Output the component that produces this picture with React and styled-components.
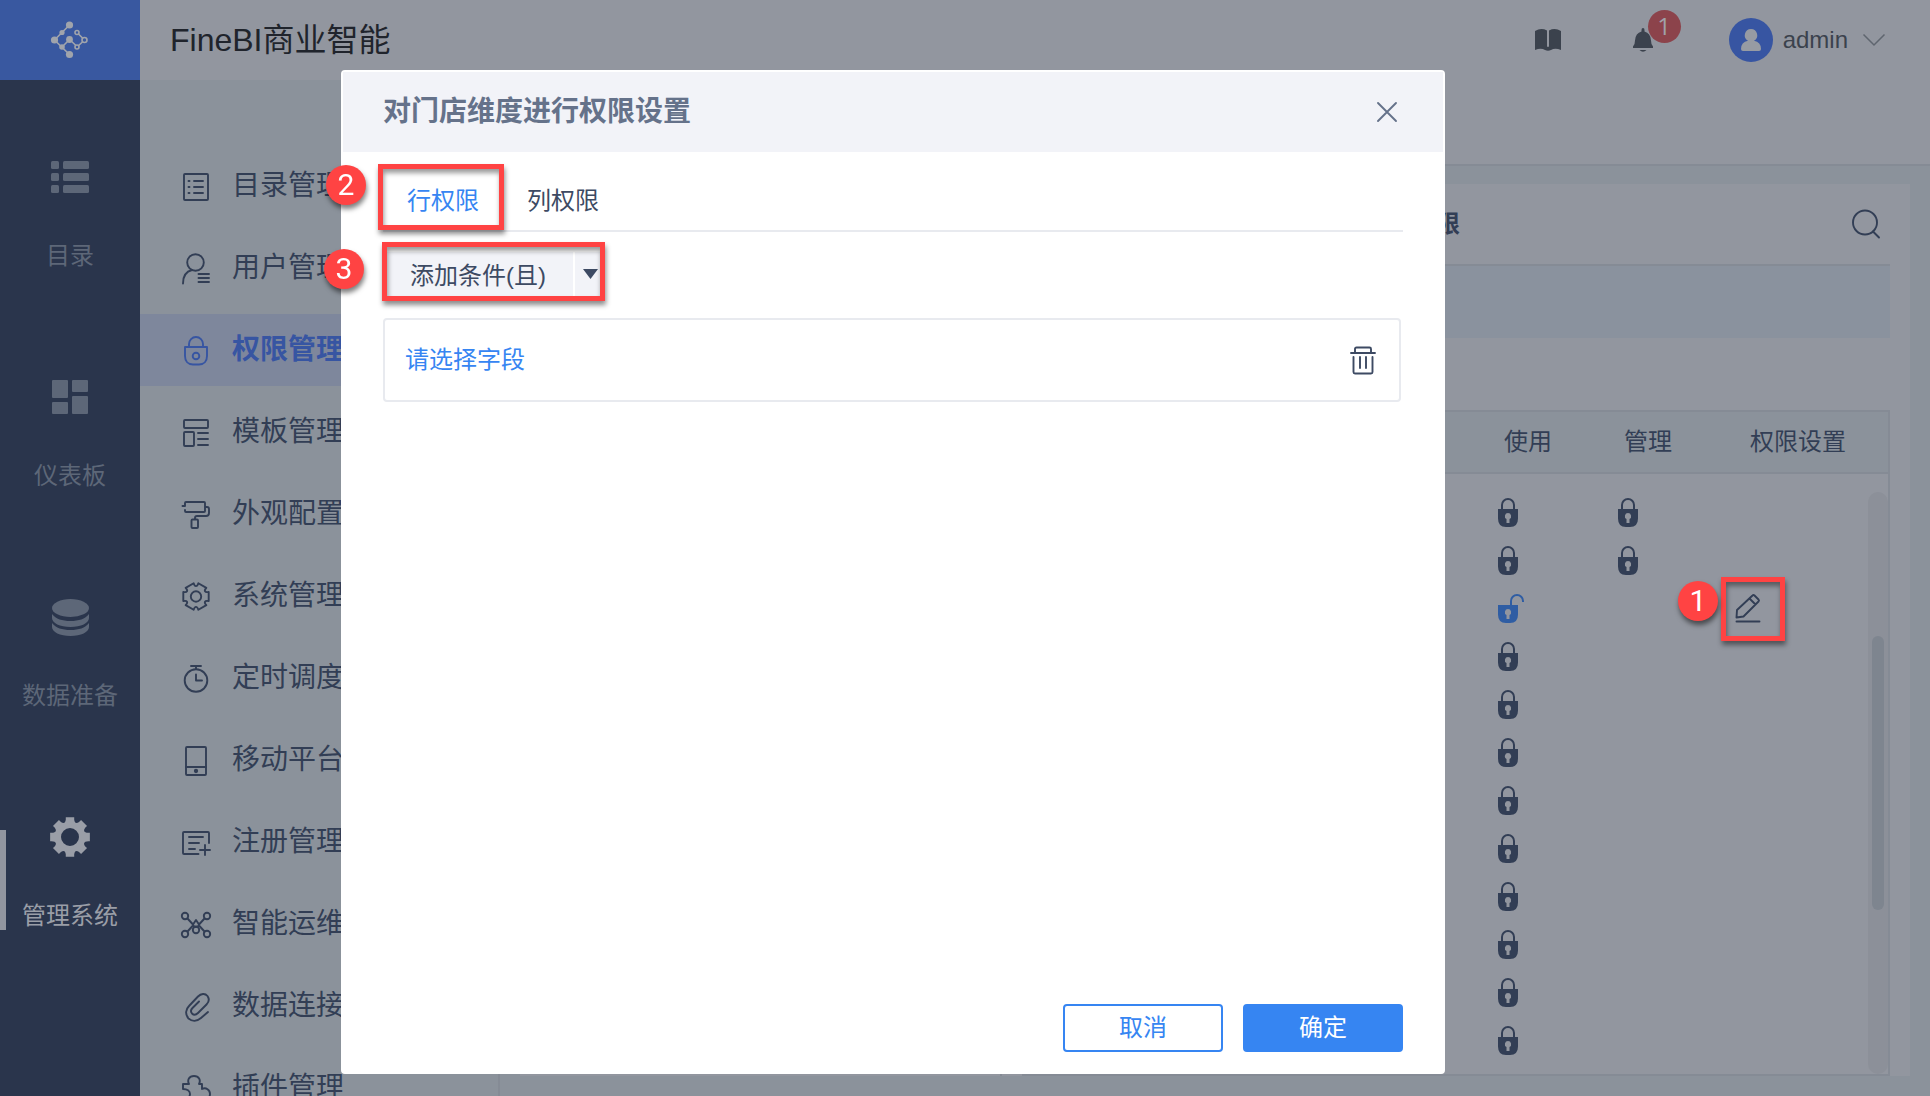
import React from "react"
import styled, { createGlobalStyle, css } from "styled-components"

const colors = {
  rail: '#2a354c',
  logo: '#3958a0',
  bar: '#92969f',
  page: '#8b929b',
  block: '#8a929e',
  line: '#858b95',
  text: '#323e55',
  active: '#3755a2',
  primary: '#3685f2',
  dialogText: '#3d4a63',
  dialogLine: '#e8eaef',
  dialogFill: '#f2f3f8',
  mark: '#ff4343'
}

const GlobalStyle = createGlobalStyle`
  * {
    box-sizing: border-box;
  }

  body {
    margin: 0;
    background: ${colors.page};
    color: ${colors.text};
    font-family: "Liberation Sans", "Noto Sans CJK SC", sans-serif;
    font-size: 24px;
    line-height: 32px;
  }

  button {
    padding: 0;
    border: 0;
    background: none;
    color: inherit;
    font: inherit;
    cursor: pointer;
  }

  a {
    color: inherit;
    text-decoration: none;
  }

  svg {
    display: block;
    flex: none;
    overflow: visible;
  }
`

const Page = styled.div`
  display: grid;
  grid-template-columns: 140px 1fr;
  height: 100vh;
  overflow: hidden;
`

const Rail = styled.nav`
  background: ${colors.rail};
  color: #5d6778;
`

const Logo = styled.a`
  display: flex;
  align-items: center;
  justify-content: center;
  height: 80px;
  margin-bottom: 30px;
  background: ${colors.logo};
  color: #a0a4ac;
`

const RailItem = styled.a`
  display: flex;
  flex-direction: column;
  align-items: center;
  gap: 43px;
  height: 220px;
  padding-top: 47px;

  ${props => props.$active && css`
    color: #9a9ea7;
    background: linear-gradient(#92969f, #92969f) left center / 6px 100px no-repeat;
  `}
`

const RailIcon = styled.span`
  display: flex;
  align-items: center;
  height: 40px;
`

const Content = styled.div`
  display: flex;
  flex-direction: column;
  min-width: 0;
  height: 100vh;
`

const TopBar = styled.header`
  display: flex;
  align-items: center;
  justify-content: space-between;
  flex: none;
  height: 80px;
  padding: 0 45px 0 30px;
  background: ${colors.bar};
`

const Product = styled.h1`
  margin: 0;
  color: #20242c;
  font-size: 32px;
  font-weight: 400;
  line-height: 40px;
`

const Tools = styled.div`
  display: flex;
  align-items: center;
  color: #3b424d;
`

const Bell = styled.button`
  position: relative;
  margin: 0 76px 0 72px;
`

const Count = styled.span`
  position: absolute;
  top: -18px;
  left: 15px;
  width: 33px;
  height: 33px;
  border-radius: 50%;
  background: #8c434b;
  color: #a0a2a9;
  font-family: "Open Sans", sans-serif;
  text-align: center;
`

const User = styled.button`
  display: flex;
  align-items: center;
`

const Avatar = styled.span`
  display: flex;
  align-items: center;
  justify-content: center;
  width: 44px;
  height: 44px;
  margin-right: 10px;
  border-radius: 50%;
  background: ${colors.active};
  color: #979ba3;
`

const UserName = styled.span`
  margin-right: 15px;
`

const Body = styled.div`
  display: flex;
  flex: 1;
  min-height: 0;
`

const SideNav = styled.nav`
  display: flex;
  flex: none;
  flex-direction: column;
  gap: 10px;
  width: 360px;
  padding-top: 70px;
  border-right: 2px solid ${colors.line};
  overflow: hidden;
`

const SideItem = styled.a`
  display: flex;
  align-items: center;
  flex: none;
  gap: 21px;
  height: 72px;
  padding-left: 41px;
  font-size: 28px;

  ${props => props.$active && css`
    background: #7e879c;
    color: ${colors.active};
    font-weight: 700;
  `}
`

const Main = styled.main`
  display: flex;
  flex: 1;
  flex-direction: column;
  min-width: 0;
`

const TabStrip = styled.div`
  flex: none;
  height: 86px;
  border-bottom: 2px solid ${colors.line};
  background: ${colors.bar};
`

const Panel = styled.section`
  display: grid;
  grid-template-columns: 482px 1fr;
  flex: 1;
  min-height: 0;
  margin: 18px 20px 20px;
  background: ${colors.bar};
`

const TreePane = styled.div`
  border-right: 2px solid ${colors.line};
`

const GrantPane = styled.div`
  display: flex;
  flex-direction: column;
  min-width: 0;
  padding: 0 20px;
`

const GrantHead = styled.div`
  display: flex;
  align-items: center;
  justify-content: space-between;
  flex: none;
  height: 82px;
  padding: 0 10px 0 390px;
  border-bottom: 2px solid ${colors.line};
`

const GrantTitle = styled.h2`
  margin: 0;
  font-size: 24px;
`

const Notice = styled.div`
  flex: none;
  height: 72px;
  margin-bottom: 72px;
  background: ${colors.block};
`

const Grid = styled.div`
  position: relative;
  flex: 1;
  min-height: 0;
  border: 2px solid ${colors.line};
`

const Table = styled.table`
  width: 100%;
  table-layout: fixed;
  border-collapse: separate;
  border-spacing: 0;
`

const Th = styled.th`
  width: ${props => props.$width};
  height: 62px;
  padding: 0;
  border-bottom: 2px solid ${colors.line};
  background: ${colors.page};
  font-weight: 400;
`

const SpacerCell = styled.td`
  height: 14px;
  padding: 0;
`

const Td = styled.td`
  height: 48px;
  padding: 0;
`

const CellIcon = styled.span`
  position: relative;
  display: flex;
  justify-content: center;
  width: 80px;
  color: ${props => props.$open ? '#2f5da3' : colors.text};
`

const Track = styled.div`
  position: absolute;
  top: 80px;
  right: 0;
  bottom: 0;
  width: 20px;
  padding: 144px 4px 0;
  border-radius: 10px;
  background: #8c9099;
`

const Thumb = styled.div`
  height: 274px;
  border-radius: 6px;
  background: #7e858f;
`

const Overlay = styled.div`
  position: fixed;
  inset: 0;
  display: flex;
  padding: 70px 22px 22px 341px;
  pointer-events: none;
`

const Dialog = styled.section`
  display: flex;
  flex-direction: column;
  width: 1104px;
  border: 2px solid #fff;
  border-radius: 4px;
  background: #fff;
  color: ${colors.dialogText};
  pointer-events: auto;
`

const DialogHead = styled.header`
  display: flex;
  align-items: center;
  justify-content: space-between;
  flex: none;
  height: 80px;
  padding: 0 46px 0 40px;
  background: ${colors.dialogFill};
  color: #65728a;
`

const DialogTitle = styled.h2`
  margin: 0;
  font-size: 28px;
`

const DialogBody = styled.div`
  flex: 1;
  padding: 18px 40px 0;
`

const Tabs = styled.div`
  display: flex;
  height: 62px;
  border-bottom: 2px solid ${colors.dialogLine};
`

const Tab = styled.button`
  position: relative;
  padding-top: 2px;
  width: 120px;
  color: ${props => props.$active ? colors.primary : 'inherit'};
`

const SplitButton = styled.div`
  position: relative;
  display: flex;
  gap: 2px;
  width: 222px;
  height: 48px;
  margin: 20px 0 18px;
`

const AddButton = styled.button`
  width: 190px;
  background: ${colors.dialogFill};
`

const MoreButton = styled.button`
  display: flex;
  align-items: center;
  justify-content: center;
  flex: 1;
  padding-bottom: 4px;
  background: ${colors.dialogFill};
`

const Condition = styled.div`
  display: flex;
  align-items: center;
  justify-content: space-between;
  height: 84px;
  margin-right: 2px;
  padding: 0 22px 0 20px;
  border: 2px solid ${colors.dialogLine};
  border-radius: 4px;
`

const FieldButton = styled.button`
  color: ${colors.primary};
`

const DialogFoot = styled.footer`
  display: flex;
  justify-content: flex-end;
  gap: 20px;
  padding: 0 40px 20px;
`

const FootButton = styled.button`
  width: 160px;
  height: 48px;
  border: 2px solid ${colors.primary};
  border-radius: 4px;
  background: ${props => props.$primary ? colors.primary : '#fff'};
  color: ${props => props.$primary ? '#fff' : colors.primary};
`

/* tutorial marks, drawn over the control they point at */
const Frame = styled.span`
  position: absolute;
  top: ${props => props.$top}px;
  left: ${props => props.$left}px;
  width: ${props => props.$width}px;
  height: ${props => props.$height}px;
  border: 5px solid ${colors.mark};
  box-shadow: 1px 4px 5px rgba(0, 0, 0, 0.45), inset 1px 4px 5px rgba(0, 0, 0, 0.4);
  pointer-events: none;
`

const Step = styled.span`
  position: absolute;
  top: ${props => props.$top}px;
  left: ${props => props.$left}px;
  width: 40px;
  height: 40px;
  border-radius: 50%;
  background: ${colors.mark};
  box-shadow: 1px 4px 5px rgba(0, 0, 0, 0.5);
  color: #fff;
  font-family: Roboto, sans-serif;
  font-size: 30px;
  line-height: 40px;
  text-align: center;
  pointer-events: none;
`

// closed outline with evenly spaced teeth and rounded notches
const gearPath = (teeth, cx, cy, outer, inner, half) => {
  const step = 360 / teeth
  const at = (r, deg) => {
    const a = deg * Math.PI / 180
    return `${(cx + r * Math.cos(a)).toFixed(2)} ${(cy + r * Math.sin(a)).toFixed(2)}`
  }
  let d = ''
  for (let i = 0; i < teeth; i++) {
    const a = i * step
    d += `${i ? 'L' : 'M'}${at(outer, a - half)}L${at(outer, a + half)}`
    d += `C${at(inner, a + half + 3)} ${at(inner, a + step - half - 3)} ${at(outer, a + step - half)}`
  }
  return d + 'Z'
}

const Line = ({ size = 30, children }) => (
  <svg width={size} height={size} viewBox={`0 0 ${size} ${size}`} fill="none" stroke="currentColor" strokeWidth="1.9" strokeLinejoin="round" strokeLinecap="round" aria-hidden="true">
    {children}
  </svg>
)

const LogoMark = () => (
  <svg width="38" height="38" viewBox="51 21 38 38" fill="none" stroke="currentColor" strokeWidth="1.6" aria-hidden="true">
    <path d="M69.5 25 54.5 40l15 14.500M62 47l7.500-7.500 7.500 7M77 32.500l7.500 7.500-7.500 7" />
    <g fill="currentColor" stroke="none">
      <circle cx="69.500" cy="25" r="3.600" />
      <circle cx="62" cy="32.500" r="2.600" />
      <circle cx="54.500" cy="40" r="3.600" />
      <circle cx="62" cy="47" r="2.800" />
      <circle cx="69.500" cy="54.500" r="3.600" />
      <circle cx="69.500" cy="39.500" r="3.400" />
    </g>
    <g fill={colors.logo}>
      <circle cx="77" cy="32.500" r="2" />
      <circle cx="84.500" cy="40" r="2.500" />
      <circle cx="77" cy="47" r="2" />
    </g>
  </svg>
)

const ListIcon = () => (
  <svg width="38" height="32" viewBox="0 0 38 32" fill="currentColor" aria-hidden="true">
    {[0, 12, 24].map(y => (
      <g key={y}>
        <rect x="0" y={y} width="8" height="8" rx="1.500" />
        <rect x="12" y={y} width="26" height="8" rx="1.500" />
      </g>
    ))}
  </svg>
)

const BoardIcon = () => (
  <svg width="36" height="34" viewBox="0 0 36 34" fill="currentColor" aria-hidden="true">
    <rect width="16" height="18" rx="1" />
    <rect y="22" width="16" height="12" rx="1" />
    <rect x="20" width="16" height="12" rx="1" />
    <rect x="20" y="16" width="16" height="18" rx="1" />
  </svg>
)

const DataIcon = () => (
  <svg width="37" height="37" viewBox="0 0 37 37" fill="currentColor" aria-hidden="true">
    <ellipse cx="18.500" cy="9" rx="18.500" ry="9" />
    <path d="M0 15c4 5 10 7 18.500 7S33 20 37 15v4c0 5-8 9-18.500 9S0 24 0 19z" />
    <path d="M0 24c4 5 10 7 18.500 7S33 29 37 24v4c0 5-8 9-18.500 9S0 33 0 28z" />
  </svg>
)

const SystemIcon = () => (
  <svg width="40" height="40" viewBox="0 0 40 40" fill="currentColor" fillRule="evenodd" aria-hidden="true">
    <path d={gearPath(8, 20, 20, 20.3, 14, 12) + 'M29 20a9 9 0 1 0-18 0a9 9 0 1 0 18 0Z'} />
  </svg>
)

const sideIcons = {
  catalog: <><rect x="3" y="3" width="24" height="26" rx="1" /><path d="M7.500 10h1M13 10h9M7.500 16h1M13 16h9M7.500 22h1M13 22h9" /></>,
  user: <><circle cx="14.500" cy="9.500" r="8.300" /><path d="M2 30.500C2 24 5 18.500 11 17M17.500 21h10.500M17.500 25h10.500M17.500 29h10.500" /></>,
  lock: <><path d="M4 12h22v9c0 5-3 8.500-8 8.500h-6c-5 0-8-3.500-8-8.500zM8 12V9a7 7 0 0 1 14 0v3" /><circle cx="15" cy="21" r="3.300" /></>,
  template: <><rect x="3" y="3" width="24" height="8" rx="1" /><rect x="3" y="15" width="10" height="14" rx="1" /><path d="M17 16h10M17 22h10M17 28h10" /></>,
  roller: <><path d="M1.500 7H4V4q0-1 1-1h18q1 0 1 1v8q0 1-1 1H5q-1 0-1-1v-1M24 8h2q2 0 2 2v4q0 3-3 3h-9q-2 0-2 2v1" /><rect x="10.500" y="20.500" width="6.500" height="8.500" rx="1" /></>,
  gear: <><path d={gearPath(6, 15, 15.5, 13.5, 9.5, 20)} /><circle cx="15" cy="15.500" r="5.200" /></>,
  timer: <><circle cx="15" cy="17.500" r="11.300" /><path d="M10 3h10M15 3v3M15 11.500v6h6" /></>,
  mobile: <><rect x="5" y="2" width="20" height="28" rx="1" /><path d="M5 22h20" /><circle cx="15" cy="26" r="1.200" fill="currentColor" /></>,
  register: <><path d="M28 16V6q0-1-1-1H3q-1 0-1 1v20q0 1 1 1h14.500M8 10h14M8 16h10M8 22h6M19 23h10M24 18v10" /></>,
  ops: <><circle cx="4" cy="7" r="3.200" /><circle cx="26" cy="7" r="3.200" /><circle cx="4" cy="25" r="3.200" /><circle cx="26" cy="25" r="3.200" /><circle cx="15" cy="21" r="3.200" /><path d="m6.500 9.500 5.500 6M23.500 9.500l-5.500 6M6.500 22.500l5.500-6M23.500 22.500l-5.500-6M15 11l-3 4.500q0 2 3 2.300 3-.300 3-2.300z" /></>,
  clip: <path d="m27 21-7 6c-4 3.500-9 3.500-12.500.500-3.500-4-3-9 .500-12.500L17 5.500c3-3 7-3.500 9.500-.500 2 3 1.500 6-1 8.500L17 22c-2 2-4.500 2-6 .500-1.500-1.800-1-4 .500-5.500l6.500-6.500" />,
  plugin: <path d="M2 11h6c-2-4 0-8 5-8s7 4 5 8h3v5c4-2 8 1 8 5s-4 7-8 5v6H2v-6c4 0 7-2 7-5s-3-5-7-5z" />
}

const LockIcon = ({ open }) => (
  <svg width="20" height="29" viewBox="0 0 20 29" aria-hidden="true">
    <path d={open ? 'M13 12V7a6 6 0 0 1 12 0v1' : 'M4 12V7a6 6 0 0 1 12 0v5'} fill="none" stroke="currentColor" strokeWidth="2" />
    <path fillRule="evenodd" fill="currentColor" d="M0 11h20v9.500Q20 29 12 29H8Q0 29 0 20.500zM10 15a3.200 3.200 0 0 0-1.500 6v4h3v-4a3.200 3.200 0 0 0-1.500-6z" />
  </svg>
)

const railItems = [
  { label: '目录', icon: <ListIcon /> },
  { label: '仪表板', icon: <BoardIcon /> },
  { label: '数据准备', icon: <DataIcon /> },
  { label: '管理系统', icon: <SystemIcon />, active: true }
]

const sideItems = [
  { label: '目录管理', icon: 'catalog' },
  { label: '用户管理', icon: 'user' },
  { label: '权限管理', icon: 'lock', active: true },
  { label: '模板管理', icon: 'template' },
  { label: '外观配置', icon: 'roller' },
  { label: '系统管理', icon: 'gear' },
  { label: '定时调度', icon: 'timer' },
  { label: '移动平台', icon: 'mobile' },
  { label: '注册管理', icon: 'register' },
  { label: '智能运维', icon: 'ops' },
  { label: '数据连接', icon: 'clip' },
  { label: '插件管理', icon: 'plugin' }
]

const rows = Array.from({ length: 12 }, (_, i) => ({
  open: i === 2,
  manage: i < 2,
  edit: i === 2
}))

const GrantTable = () => (
  <Grid>
    <Table>
      <thead>
        <tr>
          <Th $width="auto" />
          <Th $width="120px">使用</Th>
          <Th $width="120px">管理</Th>
          <Th $width="180px">权限设置</Th>
        </tr>
      </thead>
      <tbody>
        <tr><SpacerCell colSpan="4" /></tr>
        {rows.map((row, i) => (
          <tr key={i}>
            <Td />
            <Td><CellIcon $open={row.open}><LockIcon open={row.open} /></CellIcon></Td>
            <Td>{row.manage && <CellIcon><LockIcon /></CellIcon>}</Td>
            <Td>
              {row.edit && (
                <CellIcon>
                  <button aria-label="权限设置">
                    <Line size={28}>
                      <path d="M2.500 23.500l.500-7.500L18.500 1.500q1-1 2 0l4 4q1 1 0 2L9.500 22.500zM15.500 4.500l6 6M2.500 27.500h23" />
                    </Line>
                  </button>
                  <Frame $top={-17} $left={13} $width={64} $height={64} />
                  <Step $top={-13} $left={-30}>1</Step>
                </CellIcon>
              )}
            </Td>
          </tr>
        ))}
      </tbody>
    </Table>
    <Track><Thumb /></Track>
  </Grid>
)

const PermissionDialog = () => (
  <Overlay>
    <Dialog role="dialog" aria-labelledby="dialog-title">
      <DialogHead>
        <DialogTitle id="dialog-title">对门店维度进行权限设置</DialogTitle>
        <button aria-label="关闭">
          <Line size={20}><path d="m1 1 18 18M19 1 1 19" /></Line>
        </button>
      </DialogHead>
      <DialogBody>
        <Tabs role="tablist">
          <Tab role="tab" aria-selected="true" $active>
            行权限
            <Frame $top={-6} $left={-5} $width={126} $height={66} />
            <Step $top={-5} $left={-57}>2</Step>
          </Tab>
          <Tab role="tab" aria-selected="false">列权限</Tab>
        </Tabs>
        <SplitButton>
          <AddButton>添加条件(且)</AddButton>
          <MoreButton aria-label="更多">
            <svg width="15" height="10" viewBox="0 0 15 10" fill="currentColor"><path d="M0 0h15L7.500 10z" /></svg>
          </MoreButton>
          <Frame $top={-10} $left={-1} $width={223} $height={59} />
          <Step $top={-3} $left={-59}>3</Step>
        </SplitButton>
        <Condition>
          <FieldButton>请选择字段</FieldButton>
          <button aria-label="删除">
            <Line size={28}>
              <path d="M2 7h24M6 7V3q0-1.500 1.500-1.500h13Q22 1.500 22 3v4M4.500 11v15q0 1.500 1.500 1.500h16q1.500 0 1.500-1.500V11M11 11v11M17 11v11" />
            </Line>
          </button>
        </Condition>
      </DialogBody>
      <DialogFoot>
        <FootButton>取消</FootButton>
        <FootButton $primary>确定</FootButton>
      </DialogFoot>
    </Dialog>
  </Overlay>
)

const App = () => (
  <>
    <GlobalStyle />
    <Page>
      <Rail>
        <Logo href="#" aria-label="FineBI"><LogoMark /></Logo>
        {railItems.map(x => (
          <RailItem href="#" key={x.label} $active={x.active}>
            <RailIcon>{x.icon}</RailIcon>
            {x.label}
          </RailItem>
        ))}
      </Rail>
      <Content>
        <TopBar>
          <Product>FineBI商业智能</Product>
          <Tools>
            <button aria-label="帮助">
              <svg width="26" height="22" viewBox="0 0 26 22" fill="currentColor" aria-hidden="true">
                <path d="M0 2Q6-1.500 12 1.500V17q0 1 1 1t1-1V1.500Q20-1.500 26 2v19q-6-2.500-10 0-3 1.500-6 0-4-2.500-10 0z" />
              </svg>
            </button>
            <Bell aria-label="消息">
              <svg width="20" height="24" viewBox="0 0 20 24" fill="currentColor" aria-hidden="true">
                <path d="M10 0q1.500 0 1.500 2v1.500q6 1.500 6.500 9 0 4 2 6V20H0v-1.500q2-2 2-6 .500-7.500 6.500-9V2q0-2 1.500-2zM6.500 22h7q-3.500 3.500-7 0z" />
              </svg>
              <Count>1</Count>
            </Bell>
            <User>
              <Avatar>
                <svg width="22" height="22" viewBox="0 0 22 22" fill="currentColor" aria-hidden="true">
                  <path d="M11 0a6.300 6.300 0 0 1 3 11.800q7 1.500 7 8.200 0 2-2 2H3q-2 0-2-2 0-6.700 7-8.200A6.300 6.300 0 0 1 11 0z" />
                </svg>
              </Avatar>
              <UserName>admin</UserName>
              <svg width="22" height="12" viewBox="0 0 22 12" fill="none" stroke="#5f656f" strokeWidth="1.500" aria-hidden="true">
                <path d="m.500.500 10.500 10.500L21.500.500" />
              </svg>
            </User>
          </Tools>
        </TopBar>
        <Body>
          <SideNav>
            {sideItems.map(x => (
              <SideItem href="#" key={x.label} $active={x.active}>
                <Line>{sideIcons[x.icon]}</Line>
                {x.label}
              </SideItem>
            ))}
          </SideNav>
          <Main>
            <TabStrip />
            <Panel>
              <TreePane />
              <GrantPane>
                <GrantHead>
                  <GrantTitle>权限</GrantTitle>
                  <button aria-label="搜索">
                    <Line size={28}>
                      <circle cx="13" cy="12.500" r="12" /><path d="m21 21.500 6 6" />
                    </Line>
                  </button>
                </GrantHead>
                <Notice />
                <GrantTable />
              </GrantPane>
            </Panel>
          </Main>
        </Body>
      </Content>
    </Page>
    <PermissionDialog />
  </>
)

export default App
